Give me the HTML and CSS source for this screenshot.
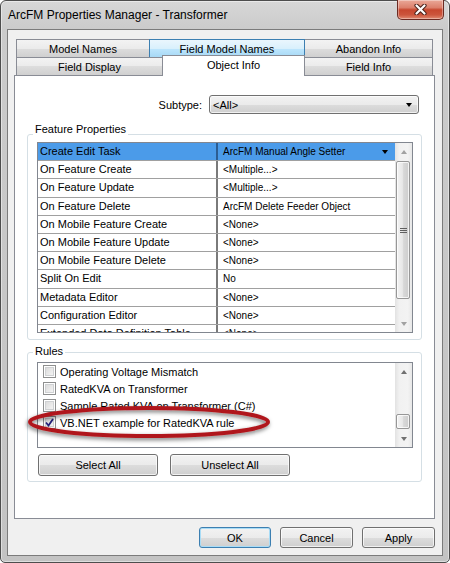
FILE: index.html
```html
<!DOCTYPE html>
<html>
<head>
<meta charset="utf-8">
<title>ArcFM Properties Manager - Transformer</title>
<link rel="stylesheet" href="styles.css">
</head>
<body>
<div class="window">
  <div class="titlebar">
    <span class="title">ArcFM Properties Manager - Transformer</span>
    <div class="close-btn">
      <svg width="13" height="11" viewBox="0 0 13 11">
        <path d="M2.5 1.5 L10.5 9.5 M10.5 1.5 L2.5 9.5" stroke="#4a2019" stroke-width="4.2" stroke-linecap="round" fill="none"/>
        <path d="M2.5 1.5 L10.5 9.5 M10.5 1.5 L2.5 9.5" stroke="#ffffff" stroke-width="2.2" stroke-linecap="round" fill="none"/>
      </svg>
    </div>
  </div>
  <div class="client">
    <div class="tabctl">
      <div class="tabrow">
        <div class="tab t-model">Model Names</div>
        <div class="tab t-fmn hover">Field Model Names</div>
        <div class="tab t-aband">Abandon Info</div>
      </div>
      <div class="tabrow row2">
        <div class="tab t-fd">Field Display</div>
        <div class="tab t-oi selected">Object Info</div>
        <div class="tab t-fi">Field Info</div>
      </div>
      <div class="panel">
        <div class="subtype-row">
          <span class="label">Subtype:</span>
          <div class="combo"><span>&lt;All&gt;</span><span class="combo-arrow"></span></div>
        </div>

        <div class="group fp">
          <div class="group-title">Feature Properties</div>
          <div class="grid">
            <div class="grid-rows">
              <div class="row sel"><div class="name">Create Edit Task</div><div class="val">ArcFM Manual Angle Setter<span class="dd-arrow"></span></div></div>
              <div class="row"><div class="name">On Feature Create</div><div class="val">&lt;Multiple...&gt;</div></div>
              <div class="row"><div class="name">On Feature Update</div><div class="val">&lt;Multiple...&gt;</div></div>
              <div class="row"><div class="name">On Feature Delete</div><div class="val">ArcFM Delete Feeder Object</div></div>
              <div class="row"><div class="name">On Mobile Feature Create</div><div class="val">&lt;None&gt;</div></div>
              <div class="row"><div class="name">On Mobile Feature Update</div><div class="val">&lt;None&gt;</div></div>
              <div class="row"><div class="name">On Mobile Feature Delete</div><div class="val">&lt;None&gt;</div></div>
              <div class="row"><div class="name">Split On Edit</div><div class="val">No</div></div>
              <div class="row"><div class="name">Metadata Editor</div><div class="val">&lt;None&gt;</div></div>
              <div class="row"><div class="name">Configuration Editor</div><div class="val">&lt;None&gt;</div></div>
              <div class="row"><div class="name">Extended Data Definition Table</div><div class="val">&lt;None&gt;</div></div>
            </div>
            <div class="vscroll grid-sb">
              <div class="sb-btn"><span class="tri-up"></span></div>
              <div class="thumb big"><span class="grip"></span></div>
              <div class="sb-space"></div>
              <div class="sb-btn"><span class="tri-down"></span></div>
            </div>
          </div>
        </div>

        <div class="group rules">
          <div class="group-title">Rules</div>
          <div class="listbox">
            <div class="items">
              <div class="item"><span class="cb"></span><span>Operating Voltage Mismatch</span></div>
              <div class="item"><span class="cb"></span><span>RatedKVA on Transformer</span></div>
              <div class="item"><span class="cb"></span><span>Sample Rated KVA on Transformer (C#)</span></div>
              <div class="item"><span class="cb checked"><svg width="9" height="9" viewBox="0 0 9 9"><path d="M1 4.5 L3.5 7.5 L8 1" stroke="#24207a" stroke-width="1.8" fill="none"/></svg></span><span>VB.NET example for RatedKVA rule</span></div>
            </div>
            <div class="vscroll list-sb">
              <div class="sb-btn"><span class="tri-up dark"></span></div>
              <div class="sb-space"></div>
              <div class="thumb small"></div>
              <div class="sb-btn"><span class="tri-down dark"></span></div>
            </div>
          </div>
          <div class="btnrow">
            <button class="btn wide">Select All</button>
            <button class="btn wide">Unselect All</button>
          </div>
        </div>
      </div>
    </div>
    <div class="dlg-buttons">
      <button class="btn default b-ok">OK</button>
      <button class="btn b-cancel">Cancel</button>
      <button class="btn b-apply">Apply</button>
    </div>
  </div>

  <svg class="annotation" width="256" height="46" viewBox="0 0 256 46">
    <defs>
      <filter id="sh" x="-10%" y="-40%" width="120%" height="180%">
        <feDropShadow dx="-1" dy="2" stdDeviation="2.2" flood-color="#000" flood-opacity="0.55"/>
      </filter>
    </defs>
    <ellipse cx="124" cy="21" rx="119" ry="14" fill="none" stroke="#b0181d" stroke-width="4" filter="url(#sh)"/>
  </svg>
</div>
</body>
</html>
```

FILE: styles.css
```css
* { box-sizing: border-box; }

html, body {
  margin: 0;
  padding: 0;
  background: #ffffff;
}

body {
  width: 450px;
  height: 563px;
  overflow: hidden;
  font-family: "Liberation Sans", Arial, sans-serif;
  font-size: 11px;
  color: #000;
}

/* ---------- window frame ---------- */
.window {
  position: relative;
  width: 450px;
  height: 563px;
  border: 1px solid #4d4d4d;
  border-radius: 6px 6px 5px 5px;
  background: linear-gradient(#d7d7d7, #cbcbcb 28px, #c3c3c3);
  box-shadow: inset 0 0 0 1px rgba(255, 255, 255, 0.45);
  padding: 0 6px 6px;
  display: flex;
  flex-direction: column;
}

.titlebar {
  height: 28px;
  flex: none;
  display: flex;
  align-items: flex-start;
}

.title {
  font-size: 12px;
  line-height: 14px;
  margin: 7px 0 0 1px;
  color: #000;
}

.close-btn {
  margin: -1px -1px 0 auto;
  width: 47px;
  height: 20px;
  border: 1px solid #6b2a22;
  border-top: none;
  border-radius: 0 0 5px 5px;
  background: linear-gradient(#eaa898 0%, #dc806c 40%, #c7472f 52%, #cc553c 78%, #e08a72 100%);
  box-shadow: inset 0 0 0 1px rgba(255, 255, 255, 0.35);
  display: flex;
  align-items: center;
  justify-content: center;
}

/* ---------- client area ---------- */
.client {
  flex: 1;
  border: 1px solid #7b7b7b;
  background: #f0f0f0;
  padding: 9px 7px 0 6px;
  display: flex;
  flex-direction: column;
}

/* ---------- tabs ---------- */
.tabctl {
  display: flex;
  flex-direction: column;
}

.tabrow {
  display: flex;
  height: 18px;
  margin: 0 2px;
}

.tabrow.row2 {
  align-items: flex-end;
}

.tab {
  height: 18px;
  border: 1px solid #898c95;
  border-bottom: none;
  background: linear-gradient(#f3f3f3 0%, #ebebeb 50%, #dddddd 50%, #d0d0d0 100%);
  display: flex;
  align-items: center;
  justify-content: center;
  line-height: 14px;
  margin-left: -1px;
  white-space: nowrap;
}

.tab:first-child { margin-left: 0; }

.t-model { width: 134px; }
.t-fmn { width: 156px; }
.t-aband { width: 129px; }
.t-fd { width: 147px; }
.t-oi { width: 143px; }
.t-fi { width: 129px; }

.tab.hover {
  position: relative;
  z-index: 1;
  border-color: #3c7fb1;
  background: linear-gradient(#eaf6fd 0%, #d9f0fc 50%, #bee6fd 50%, #a7d9f5 100%);
}

.tab.selected {
  position: relative;
  z-index: 2;
  height: 21px;
  margin-bottom: -1px;
  background: #ffffff;
  padding-bottom: 2px;
}

.panel {
  height: 444px;
  border: 1px solid #898c95;
  background: #ffffff;
  display: flex;
  flex-direction: column;
}

/* ---------- subtype ---------- */
.subtype-row {
  margin-top: 19px;
  display: flex;
  justify-content: flex-end;
  align-items: center;
  gap: 7px;
  padding-right: 15px;
}

.combo {
  width: 210px;
  height: 19px;
  border: 1px solid #707070;
  border-radius: 3px;
  background: linear-gradient(#f2f2f2 0%, #ebebeb 50%, #dddddd 50%, #cfcfcf 100%);
  box-shadow: inset 0 0 0 1px rgba(255, 255, 255, 0.7);
  display: flex;
  align-items: center;
  padding-left: 3px;
  line-height: 14px;
}

.combo-arrow {
  margin: 1px 6px 0 auto;
  width: 0;
  height: 0;
  border-left: 3.5px solid transparent;
  border-right: 3.5px solid transparent;
  border-top: 4px solid #000;
}

/* ---------- group boxes ---------- */
.group {
  margin: 0 12px;
  border: 1px solid #d5dfe5;
  border-radius: 3px;
  display: flex;
  flex-direction: column;
  padding: 0 8px 6px 9px;
}

.group-title {
  align-self: flex-start;
  background: #ffffff;
  padding: 0 2px;
  line-height: 14px;
  margin-left: -4px;
  white-space: nowrap;
}

.group.fp { margin-top: 20px; }
.group.fp .group-title { margin-top: -13px; }

.group.rules { margin-top: 12px; padding-bottom: 5px; }
.group.rules .group-title { margin-top: -9px; }

/* ---------- property grid ---------- */
.grid {
  margin-top: 6px;
  height: 191px;
  border: 1px solid #828790;
  display: flex;
}

.grid-rows {
  width: 357px;
  overflow: hidden;
  display: grid;
  grid-auto-rows: 18.2px;
  align-content: start;
}

.row {
  display: grid;
  grid-template-columns: 178px 179px;
  border-bottom: 1px solid #a0a0a0;
  background: #ffffff;
}

.row .name {
  padding-left: 2px;
  font-size: 11px;
  line-height: 17px;
  white-space: nowrap;
  overflow: hidden;
}

.row .val {
  border-left: 2px solid #7a7a7a;
  padding-left: 5px;
  font-size: 10px;
  line-height: 17px;
  white-space: nowrap;
  overflow: hidden;
  display: flex;
  align-items: center;
}

.row.sel { background: #4b9be9; }
.row.sel .val { border-left-color: #2c5d92; }

.dd-arrow {
  margin: 1px 7px 0 auto;
  width: 0;
  height: 0;
  border-left: 3.5px solid transparent;
  border-right: 3.5px solid transparent;
  border-top: 4px solid #000;
}

/* ---------- scrollbars ---------- */
.vscroll {
  width: 17px;
  flex: none;
  display: flex;
  flex-direction: column;
  background: linear-gradient(90deg, #e2e2e2 0%, #f1f1f1 25%, #f3f3f3 75%, #e7e7e7 100%);
}

.sb-btn {
  height: 17px;
  flex: none;
  display: flex;
  align-items: center;
  justify-content: center;
}

.sb-space { flex: 1; }

.tri-up, .tri-down {
  width: 0;
  height: 0;
  border-left: 3.5px solid transparent;
  border-right: 3.5px solid transparent;
}

.tri-up { border-bottom: 4px solid #a2a2a2; }
.tri-down { border-top: 4px solid #a2a2a2; }
.tri-up.dark { border-bottom-color: #707070; }
.tri-down.dark { border-top-color: #707070; }

.thumb {
  margin: 0 2px 0 1px;
  border: 1px solid #979797;
  border-radius: 2px;
  background: linear-gradient(90deg, #f3f3f3 0%, #e8e8e8 45%, #d8d8d8 55%, #cdcdcd 100%);
  box-shadow: inset 0 0 0 1px rgba(255, 255, 255, 0.75);
  display: flex;
  align-items: center;
  justify-content: center;
  flex: none;
}

.thumb.big { height: 138px; margin-top: 1px; }
.thumb.small { height: 15px; margin-bottom: 1px; }

.grip {
  width: 7px;
  height: 5px;
  background: repeating-linear-gradient(#5f5f5f 0, #5f5f5f 1px, transparent 1px, transparent 2px);
}

/* ---------- rules list ---------- */
.listbox {
  margin-top: 4px;
  height: 86px;
  border: 1px solid #828790;
  display: flex;
}

.items {
  flex: 1;
  background: #ffffff;
  overflow: hidden;
}

.item {
  height: 17px;
  display: flex;
  align-items: center;
  padding-left: 5px;
  gap: 4px;
  white-space: nowrap;
  line-height: 14px;
}

.cb {
  width: 13px;
  height: 13px;
  flex: none;
  border: 1px solid #8e8f8f;
  background: linear-gradient(135deg, #d5d5d5, #fafafa);
  box-shadow: inset 0 0 0 1px #ffffff, inset 0 0 0 2px #cfd1d3;
  display: flex;
  align-items: center;
  justify-content: center;
}

.btnrow {
  margin-top: 6px;
  display: flex;
  gap: 12px;
  padding-left: 1px;
}

/* ---------- buttons ---------- */
.btn {
  height: 22px;
  border: 1px solid #707070;
  border-radius: 3px;
  background: linear-gradient(#f2f2f2 0%, #ebebeb 50%, #dddddd 50%, #cfcfcf 100%);
  box-shadow: inset 0 0 0 1px rgba(255, 255, 255, 0.7);
  font-family: "Liberation Sans", Arial, sans-serif;
  font-size: 11px;
  color: #000;
  padding: 0;
  line-height: 14px;
}

.btn.wide { width: 120px; }

.btn.default {
  border-color: #3c7fb1;
  box-shadow: inset 0 0 0 1px #a9dcf6;
}

.dlg-buttons {
  margin-top: 8px;
  display: flex;
  justify-content: flex-end;
  gap: 9px;
}

.dlg-buttons .btn { height: 21px; }
.b-ok { width: 72px; }
.b-cancel { width: 73px; }
.b-apply { width: 73px; }

/* ---------- annotation overlay ---------- */
.annotation {
  position: absolute;
  left: 24px;
  top: 400px;
  overflow: visible;
  pointer-events: none;
}
```
